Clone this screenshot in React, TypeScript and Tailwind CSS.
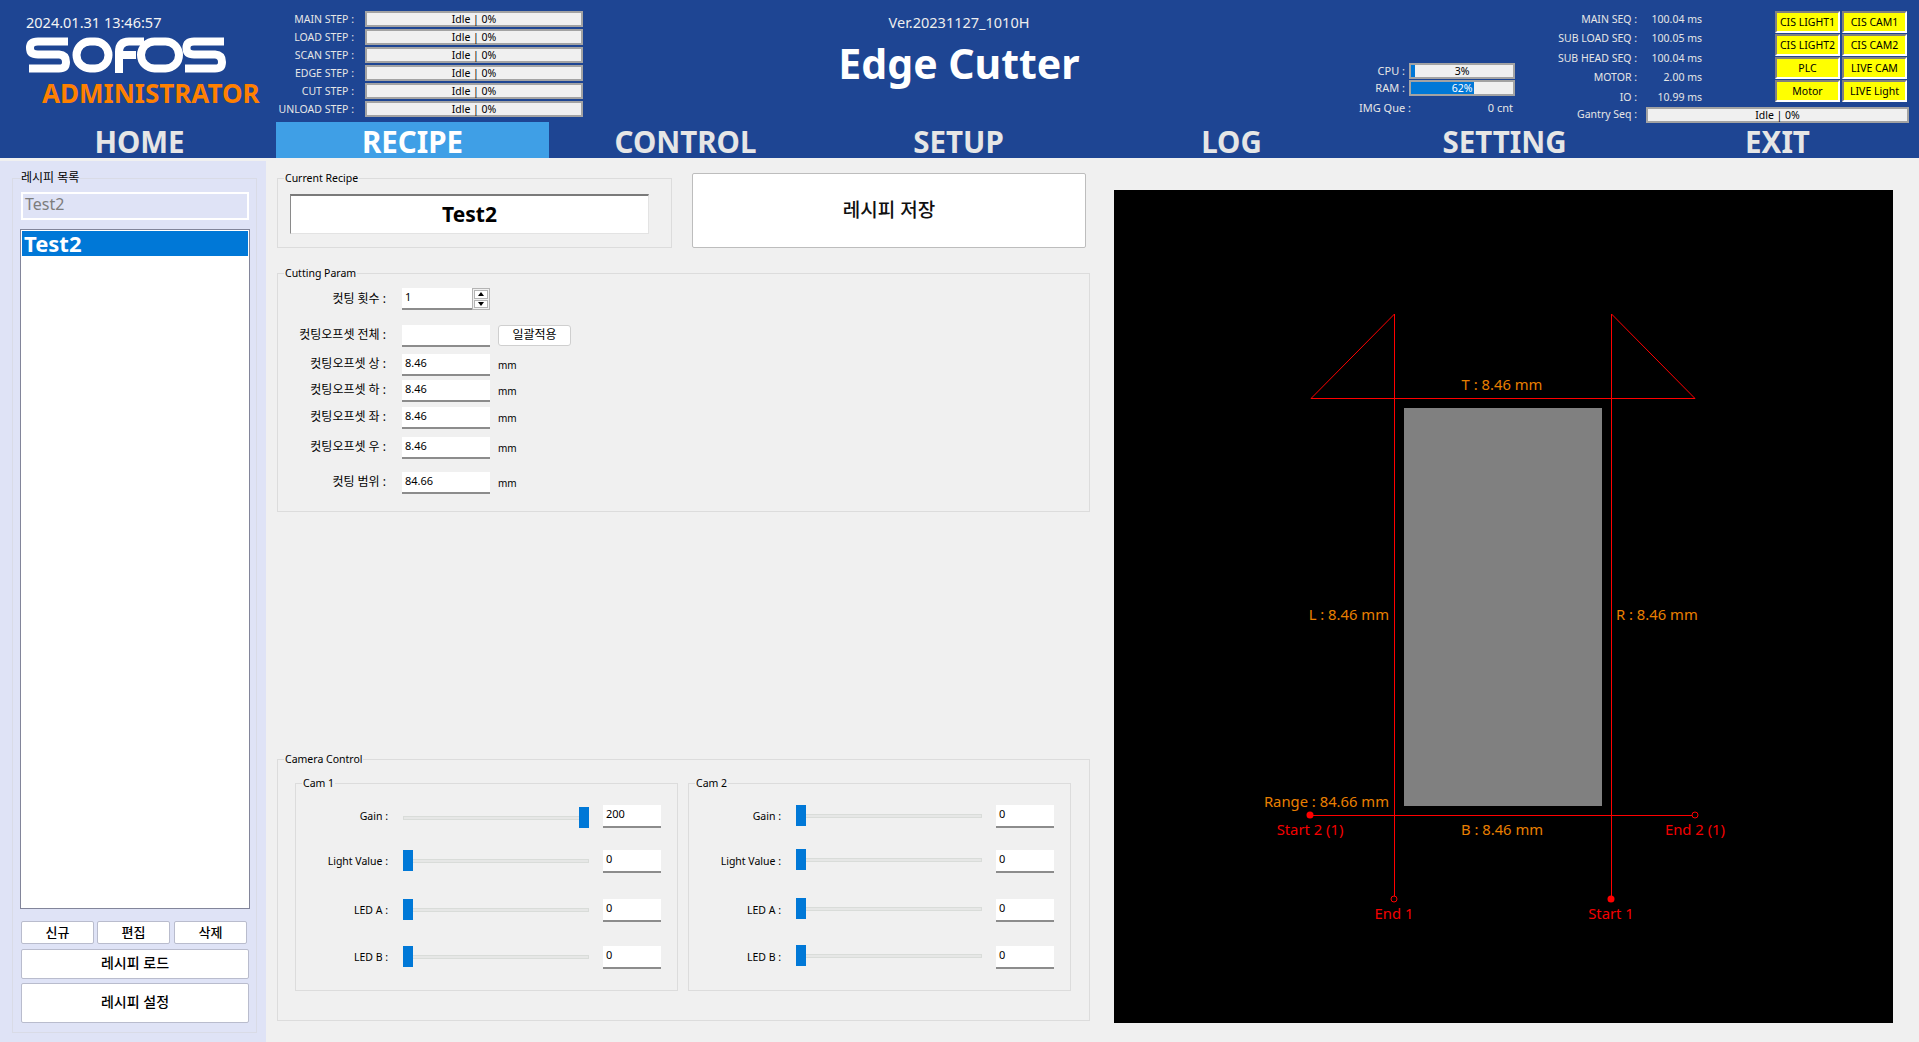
import React from "react";

const steps = ["MAIN STEP :", "LOAD STEP :", "SCAN STEP :", "EDGE STEP :", "CUT STEP :", "UNLOAD STEP :"];
const seqs = [
  ["MAIN SEQ :", "100.04 ms"],
  ["SUB LOAD SEQ :", "100.05 ms"],
  ["SUB HEAD SEQ :", "100.04 ms"],
  ["MOTOR :", "2.00 ms"],
  ["IO :", "10.99 ms"],
];
const lamps = ["CIS LIGHT1", "CIS CAM1", "CIS LIGHT2", "CIS CAM2", "PLC", "LIVE CAM", "Motor", "LIVE Light"];
const tabs = ["HOME", "RECIPE", "CONTROL", "SETUP", "LOG", "SETTING", "EXIT"];

const cutRows = [
  { label: "컷팅오프셋 전체 :", value: "", cls: "mt-[15px]", button: true },
  { label: "컷팅오프셋 상 :", value: "8.46", cls: "mt-[7px]" },
  { label: "컷팅오프셋 하 :", value: "8.46", cls: "mt-[4px]" },
  { label: "컷팅오프셋 좌 :", value: "8.46", cls: "mt-[5px]" },
  { label: "컷팅오프셋 우 :", value: "8.46", cls: "mt-[8px]" },
  { label: "컷팅 범위 :", value: "84.66", cls: "mt-[13px]" },
];

const cam1 = [
  { label: "Gain :", value: 200, cls: "", shift: "top-[2px]" },
  { label: "Light Value :", value: 0, cls: "mt-[22px]", shift: "top-0" },
  { label: "LED A :", value: 0, cls: "mt-[26px]", shift: "top-0" },
  { label: "LED B :", value: 0, cls: "mt-[24px]", shift: "top-0" },
];
const cam2 = [
  { label: "Gain :", value: 0, cls: "", shift: "top-0" },
  { label: "Light Value :", value: 0, cls: "mt-[22px]", shift: "-top-[1px]" },
  { label: "LED A :", value: 0, cls: "mt-[26px]", shift: "-top-[1px]" },
  { label: "LED B :", value: 0, cls: "mt-[24px]", shift: "-top-[1px]" },
];

function Bar({ text, fill, className }: { text: string; fill?: number; className: string }) {
  return (
    <div className={`relative flex items-center justify-center border-2 border-[#a3a3a3] bg-[#f0f0f0] pt-[1px] text-[10.5px] leading-none text-black ${className}`}>
      {fill !== undefined && <div className="absolute left-0 top-0 h-full bg-[#0078d7]" style={{ width: `${fill}%` }} />}
      <span className={`relative ${fill !== undefined && fill > 50 ? "text-white" : ""}`}>{text}</span>
    </div>
  );
}

function Group({ title, className, children }: { title: string; className: string; children?: React.ReactNode }) {
  return (
    <div className={`relative border border-[#dcdcdc] ${className}`}>
      <span className="absolute -top-[8px] left-[6px] bg-[#f0f0f0] px-[1px] text-[10.5px] leading-[15px] text-black">{title}</span>
      {children}
    </div>
  );
}

function Field({ value, className }: { value: string; className: string }) {
  return (
    <div className={`flex items-start border-b-2 border-[#8c8c8c] bg-white pl-[3px] pt-[2px] text-[11px] leading-[14px] text-black ${className}`}>
      {value}
    </div>
  );
}

function Slider({ value, shift }: { value: number; shift: string }) {
  return (
    <div className="relative h-[23px] w-[186px]">
      <div className={`absolute left-0 h-[21px] w-full ${shift}`}>
        <div className="absolute left-0 top-[9px] h-[4px] w-full border border-[#d9dcd9] bg-[#e6e7e6]" />
        <div className="absolute top-0 h-[21px] w-[10px] bg-[#0078d7]" style={{ left: `${(value / 200) * 176}px` }} />
      </div>
    </div>
  );
}

function Cam({ title, rows }: { title: string; rows: typeof cam1 }) {
  return (
    <Group title={title} className="h-[208px] w-[383px] pt-[21px]">
      {rows.map((r) => (
        <div key={r.label} className={`flex items-center ${r.cls}`}>
          <div className="w-[92px] text-right text-[10.5px] leading-none text-black">{r.label}</div>
          <div className="ml-[15px]">
            <Slider value={r.value} shift={r.shift} />
          </div>
          <Field value={String(r.value)} className="ml-[14px] h-[23px] w-[58px]" />
        </div>
      ))}
    </Group>
  );
}

function SideButton({ text, className }: { text: string; className: string }) {
  return (
    <button className={`flex items-center justify-center rounded-[2px] border border-[#b9bccd] bg-white font-medium leading-none text-black ${className}`}>
      {text}
    </button>
  );
}

function Logo() {
  return (
    <svg width="200" height="36" viewBox="0 0 200 36" fill="none" stroke="#ffffff" strokeWidth="8" role="img" aria-label="SOFOS logo">
      <path d="M42 4.5 H12 Q4 4.5 4 11 Q4 17.5 12 17.5 H33 Q40 18 40 25 Q40 31.5 33 31.5 H3" />
      <rect x="50.5" y="4.5" width="32" height="27" rx="13.5" />
      <path d="M93 36 V15 Q93 4.5 103 4.5 H118 M93 18 H110" />
      <rect x="115" y="4.5" width="38" height="27" rx="13.5" />
      <path d="M198 4.5 H168 Q160.5 4.5 160.5 11 Q160.5 17.5 168 17.5 H189 Q196 18 196 25 Q196 31.5 189 31.5 H159" />
    </svg>
  );
}

function Drawing() {
  const orange = "#e87f00";
  const red = "#f40000";
  const T = ({ x, y, fill, anchor = "middle", children }: { x: number; y: number; fill: string; anchor?: string; children: string }) => (
    <text x={x} y={y} fill={fill} fontSize="14.8" textAnchor={anchor as "middle"} stroke="none">
      {children}
    </text>
  );
  return (
    <svg className="block h-full w-full" viewBox="1114 190 779 833" fill="none">
      <rect x="1404" y="408" width="198" height="398" fill="#808080" />
      <g stroke="#ff0000" strokeWidth="1">
        <path d="M1394.5 314 V899 M1611.5 314 V899 M1311 398.5 H1695 M1310 815.5 H1695" shapeRendering="crispEdges" />
        <path d="M1394.5 314 L1311 398.5 M1611.5 314 L1695 398.5" />
        <circle cx="1695" cy="815" r="3" fill="#000000" />
        <circle cx="1394" cy="899" r="3" fill="#000000" />
      </g>
      <circle cx="1310" cy="815" r="3.5" fill="#ff0000" />
      <circle cx="1611" cy="899" r="3.5" fill="#ff0000" />
      <T x={1502} y={390} fill={orange}>T : 8.46 mm</T>
      <T x={1389} y={620} fill={orange} anchor="end">L : 8.46 mm</T>
      <T x={1616} y={620} fill={orange} anchor="start">R : 8.46 mm</T>
      <T x={1389} y={807} fill={orange} anchor="end">Range : 84.66 mm</T>
      <T x={1502} y={835} fill={orange}>B : 8.46 mm</T>
      <T x={1310} y={835} fill={red}>Start 2 (1)</T>
      <T x={1695} y={835} fill={red}>End 2 (1)</T>
      <T x={1394} y={919} fill={red}>End 1</T>
      <T x={1611} y={919} fill={red}>Start 1</T>
    </svg>
  );
}

export default function App() {
  return (
    <div className="flex h-[1042px] w-[1919px] flex-col overflow-hidden bg-[#f0f0f0] font-['Noto_Sans','Noto_Sans_CJK_KR',sans-serif]">
      <header className="flex h-[158px] flex-col bg-[#1e4593] text-white">
        <div className="flex h-[122px]">
          <div className="w-[276px] pl-[26px] pt-[13px]">
            <div className="text-[14.5px] leading-[18px] text-[#f4f4f4]">2024.01.31 13:46:57</div>
            <div className="mt-[6px]">
              <Logo />
            </div>
            <div className="ml-[16px] mt-[7px] text-[26px] font-bold leading-[26px] text-[#ff8000]">ADMINISTRATOR</div>
          </div>

          <div className="flex w-[307px] flex-col gap-[2px] pt-[11px]">
            {steps.map((s) => (
              <div key={s} className="flex h-[16px] items-center">
                <div className="w-[78px] whitespace-nowrap text-right text-[10.5px] leading-none text-[#e6e6e6]">{s}</div>
                <Bar text="Idle | 0%" className="ml-[11px] h-[16px] w-[218px]" />
              </div>
            ))}
          </div>

          <div className="w-[752px] pt-[13px] text-center">
            <div className="text-[14.5px] leading-[18px] text-[#eeeeee]">Ver.20231127_1010H</div>
            <div className="mt-[7px] text-[41px] font-bold leading-[50px] text-white">Edge Cutter</div>
          </div>

          <div className="w-[180px] pt-[63px]">
            <div className="flex h-[16px] items-center">
              <div className="w-[70px] -translate-y-[1px] text-right text-[11px] leading-none text-[#e6e6e6]">CPU :</div>
              <Bar text="3%" fill={4} className="ml-[4px] h-[16px] w-[106px]" />
            </div>
            <div className="mt-[1px] flex h-[16px] items-center">
              <div className="w-[70px] -translate-y-[1px] text-right text-[11px] leading-none text-[#e6e6e6]">RAM :</div>
              <Bar text="62%" fill={62} className="ml-[4px] h-[16px] w-[106px]" />
            </div>
            <div className="mt-[5px] flex items-center justify-between pl-[24px] pr-[2px] text-[11px] leading-[14px] text-[#e6e6e6]">
              <span>IMG Que :</span>
              <span>0 cnt</span>
            </div>
          </div>

          <div className="flex w-[394px] flex-col">
            <div className="flex h-[107px]">
              <div className="w-[187px] pt-[9px]">
                {seqs.map(([a, b]) => (
                  <div key={a} className="flex h-[19.6px] items-center text-[10.5px] leading-none text-[#e6e6e6]">
                    <div className="w-[122px] whitespace-nowrap text-right">{a}</div>
                    <div className="w-[65px] whitespace-nowrap text-right">{b}</div>
                  </div>
                ))}
              </div>
              <div className="ml-[73px] grid h-fit grid-cols-[65px_65px] gap-x-[2px] gap-y-[1px] pt-[11px]">
                {lamps.map((l) => (
                  <div key={l} className="flex h-[22px] items-center justify-center whitespace-nowrap border-2 border-b-white border-l-[#808080] border-r-white border-t-[#808080] bg-[#ffff00] pt-[1px] text-[10.5px] leading-none text-black">
                    {l}
                  </div>
                ))}
              </div>
            </div>
            <div className="flex h-[16px] items-center">
              <div className="w-[122px] -translate-y-[1px] text-right text-[10.5px] leading-none text-[#e6e6e6]">Gantry Seq :</div>
              <Bar text="Idle | 0%" className="ml-[9px] h-[16px] w-[263px]" />
            </div>
          </div>
        </div>

        <nav className="flex h-[36px] pl-[3px]">
          {tabs.map((t) => (
            <div
              key={t}
              className={
                t === "RECIPE"
                  ? "flex w-[273px] items-end justify-center bg-[#3f9fe6] text-[29.5px] font-bold leading-[36px] text-white"
                  : "flex w-[273px] items-end justify-center text-[29.5px] font-bold leading-[36px] text-[#e6e6e6]"
              }
            >
              <span className="translate-y-[2px]">{t}</span>
            </div>
          ))}
        </nav>
      </header>

      <div className="flex flex-1">
        <aside className="mt-[3px] h-[881px] w-[266px] bg-[#dfe3f6] pl-[12px] pt-[17px]">
          <div className="relative h-[855px] w-[245px] border border-[#d9dbe6] pl-[8px] pt-[13px]">
            <span className="absolute -top-[9px] left-[8px] bg-[#dfe3f6] text-[12px] leading-[15px] text-black">레시피 목록</span>
            <div className="flex h-[28px] w-[228px] items-center border-2 border-white pb-[4px] pl-[2px] text-[16px] leading-none text-[#7d7d7d]">Test2</div>
            <div className="-ml-[1px] mt-[9px] h-[680px] w-[230px] border border-[#82859a] bg-white p-[1px]">
              <div className="flex h-[25px] items-center bg-[#0078d7] pb-[1px] pl-[2px] text-[22px] font-bold leading-none text-white">Test2</div>
            </div>
            <div className="mt-[12px] flex gap-[3px]">
              <SideButton text="신규" className="h-[23px] w-[73px] pb-[1px] text-[13px]" />
              <SideButton text="편집" className="h-[23px] w-[73px] pb-[1px] text-[13px]" />
              <SideButton text="삭제" className="ml-[1px] h-[23px] w-[73px] pb-[1px] text-[13px]" />
            </div>
            <SideButton text="레시피 로드" className="mt-[5px] h-[30px] w-[228px] pb-[2px] text-[14px]" />
            <SideButton text="레시피 설정" className="mt-[4px] h-[40px] w-[228px] pb-[3px] text-[14px]" />
          </div>
        </aside>

        <main className="ml-[11px] w-[813px] pt-[15px]">
          <div className="flex h-[75px] items-end">
            <Group title="Current Recipe" className="h-[70px] w-[395px] pl-[12px] pt-[15px]">
              <div className="flex h-[40px] w-[359px] items-center justify-center border-b border-l border-r border-t-2 border-b-[#e3e3e3] border-l-[#8a8a8a] border-r-[#e3e3e3] border-t-[#7a7a7a] bg-white text-[21px] font-bold leading-none text-black">
                Test2
              </div>
            </Group>
            <button className="ml-[20px] flex h-[75px] w-[394px] items-center justify-center rounded-[2px] border border-[#bdbdbd] bg-white text-[19px] font-medium leading-none text-[#111111]">
              레시피 저장
            </button>
          </div>

          <Group title="Cutting Param" className="mt-[25px] h-[239px] w-[813px] pt-[14px]">
            <div className="flex items-center">
              <div className="w-[108px] pb-[1px] text-right text-[12px] leading-none text-black">컷팅 횟수 :</div>
              <Field value="1" className="ml-[16px] h-[22px] w-[70px]" />
              <div className="flex h-[22px] w-[18px] flex-col items-center justify-center gap-[1px] border border-[#b4b4b4] bg-[#f0f0f0] p-[1px]">
                <div className="flex h-[9px] w-[14px] items-center justify-center border border-[#b4b4b4] bg-white">
                  <span className="h-0 w-0 border-x-[3px] border-b-[4px] border-x-transparent border-b-black" />
                </div>
                <div className="flex h-[9px] w-[14px] items-center justify-center border border-[#b4b4b4] bg-white">
                  <span className="h-0 w-0 border-x-[3px] border-t-[4px] border-x-transparent border-t-black" />
                </div>
              </div>
            </div>
            {cutRows.map((r) => (
              <div key={r.label} className={`flex items-center ${r.cls}`}>
                <div className="w-[108px] whitespace-nowrap pb-[3px] text-right text-[12px] leading-none text-black">{r.label}</div>
                <Field value={r.value} className="ml-[16px] h-[22px] w-[88px]" />
                {r.button ? (
                  <button className="ml-[8px] flex h-[21px] w-[73px] -translate-y-[1px] items-center justify-center rounded-[3px] border border-[#cfcfcf] bg-white text-[12px] leading-none text-black">
                    일괄적용
                  </button>
                ) : (
                  <span className="ml-[8px] pb-[1px] text-[10px] leading-none text-black">mm</span>
                )}
              </div>
            ))}
          </Group>

          <Group title="Camera Control" className="mt-[247px] h-[262px] w-[813px] pl-[17px] pt-[23px]">
            <div className="flex gap-[10px]">
              <Cam title="Cam 1" rows={cam1} />
              <Cam title="Cam 2" rows={cam2} />
            </div>
          </Group>
        </main>

        <section className="ml-[24px] mt-[32px] h-[833px] w-[779px] bg-black">
          <Drawing />
        </section>
      </div>
    </div>
  );
}
